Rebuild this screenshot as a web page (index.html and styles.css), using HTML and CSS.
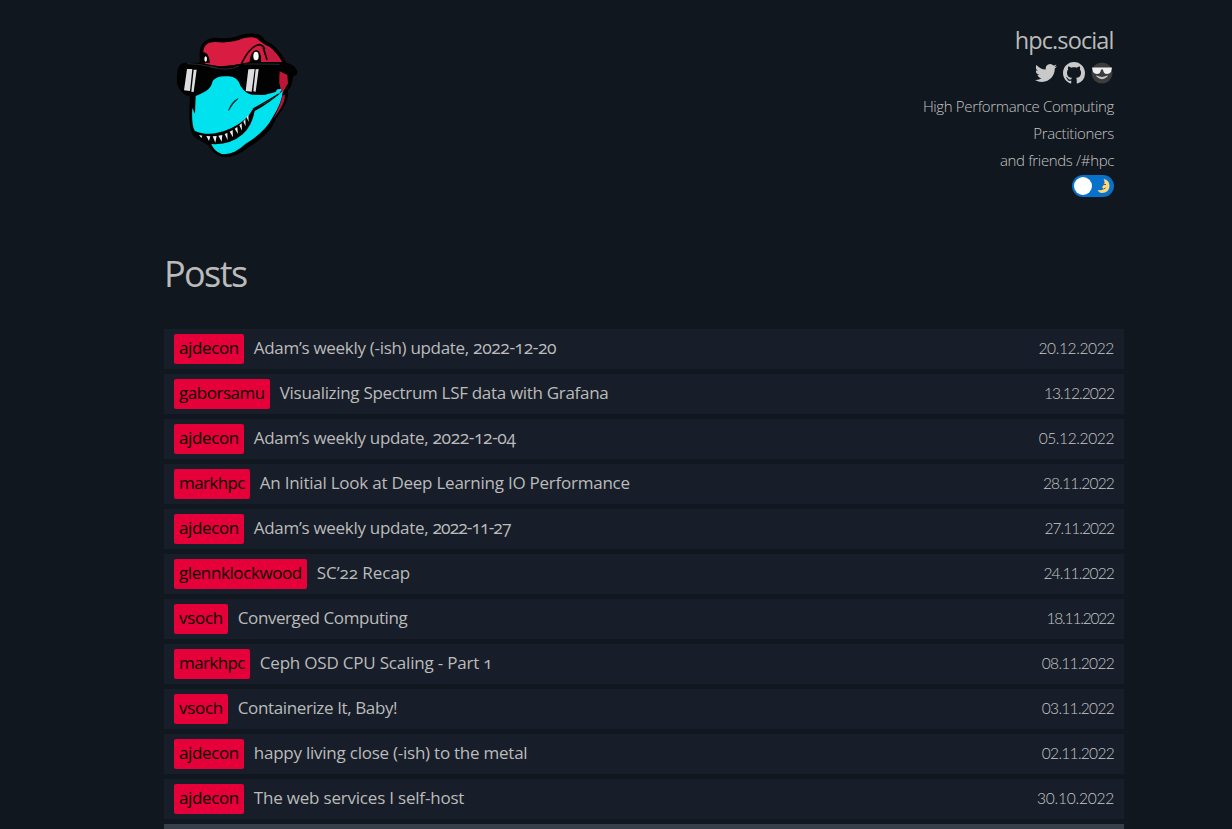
FILE: index.html
```html
<!DOCTYPE html>
<html lang="en"><head><meta charset="utf-8"><title>hpc.social</title><link rel="stylesheet" href="styles.css"></head>
<body>
<div class="page">
<header class="header">
<svg class="logo" viewBox="0 0 450 450" aria-label="Dinosaur with sunglasses">
<path d="M119 100Q119 55 168 53Q211 59 243 44Q303 32 314 60Q353 76 378 126L412 152Q414 166 400 168L394 196Q389 207 383 211Q389 230 370 264Q350 290 332 328Q302 362 262 384Q228 413 188 411Q156 401 145 376L103 351Q83 330 90 230Q50 216 51 179Q48 134 75 129L119 128Z" fill="#000"/>
<path d="M130 97Q130 67 165 66Q215 71 250 55Q290 46 299 63Q314 75 330 82Q352 100 366 126L268 126L237 133L184 140L135 131Z" fill="#d91c42"/>
<path d="M322 82Q350 98 362 126L318 126Q317 101 302 84Z" fill="#c51b40"/>
<path d="M245 130Q270 78 298 74Q309 75 314 88M309 78Q315 102 321 119" fill="none" stroke="#080006" stroke-width="5"/>
<path d="M268 129Q272 91 290 90Q306 96 303 129Z" fill="#000"/><ellipse cx="288" cy="108" rx="8" ry="13" fill="#fff"/>
<path d="M122 99Q145 88 150 128L124 130Z" fill="#000"/><ellipse cx="137" cy="117" rx="4" ry="8" fill="#fff"/>
<path d="M358 153L382 165L384 190L366 222L358 190Z" fill="#bd1738"/>
<path d="M107 228Q139 218 157 184Q169 166 204 169Q231 167 243 199Q267 228 317 224Q347 206 363 206Q367 213 353 225Q317 251 279 267Q260 303 213 325Q149 354 104 332Q94 316 97 264L105 281Z" fill="#00e2ed"/>
<path d="M368 213Q367 246 338 292Q315 337 257 371Q220 406 185 402Q162 394 154 372Q210 376 248 343Q276 318 284 273Q328 250 368 213Z" fill="#00e2ed"/>
<path d="M374 225Q378 249 340 296Q361 256 368 226Z" fill="#b5133a"/>
<path d="M111 347Q183 368 238 330Q262 311 275 275L277 290Q263 331 236 349Q196 374 157 370Q127 363 111 347Z" fill="#000"/>
<path d="M117 345L127 347L124 354ZM139 348L151 349L147 363ZM158 349L170 348L166 368ZM175 347L187 345L185 365ZM194 342L202 339L203 361ZM209 335L218 330L219 352ZM224 326L232 321L234 342ZM238 316L245 310L246 332ZM250 305L256 297L257 319ZM260 292L265 284L266 306Z" fill="#eee"/>
<path d="M206 271Q214 245 234 236Q218 249 206 271Z" fill="#001b20" stroke="#001b20" stroke-width="2"/>
<path d="M279 267Q326 241 356 222" fill="none" stroke="#000" stroke-width="4"/>
<path d="M55 143Q62 126 83 129Q134 135 180 139Q225 137 247 130Q316 130 354 126L389 131Q409 138 411 156Q407 166 393 165L359 151Q355 197 348 215Q322 226 275 224Q246 218 235 180Q216 160 188 161Q160 161 157 187Q149 221 97 225Q58 218 53 179Z" fill="#020203"/>
<path d="M82 131Q118 132 136 137L170 143M151 141Q205 155 237 138M252 132Q330 132 359 133" fill="none" stroke="#292a2e" stroke-width="3"/>
<path d="M81 147L97 147L90 213L72 211ZM101 149L110 149L101 216L94 215ZM265 148L284 147L275 215L257 213ZM287 148L296 147L287 215L280 214Z" fill="#dedee0"/>
</svg>
<div class="about">
<h1 class="site">hpc.social</h1>
<div class="icons">
<svg class="ic" viewBox="0 0 24 24"><path fill="#c9c9c9" d="M23.954 4.569a10 10 0 0 1-2.825.775 4.958 4.958 0 0 0 2.163-2.723 9.99 9.99 0 0 1-3.127 1.184 4.92 4.92 0 0 0-8.384 4.482C7.691 8.094 4.066 6.13 1.64 3.161a4.822 4.822 0 0 0-.666 2.475c0 1.71.87 3.213 2.188 4.096a4.904 4.904 0 0 1-2.228-.616v.061a4.923 4.923 0 0 0 3.946 4.827 4.996 4.996 0 0 1-2.212.085 4.937 4.937 0 0 0 4.604 3.417 9.868 9.868 0 0 1-6.102 2.105c-.39 0-.779-.023-1.17-.067a13.995 13.995 0 0 0 7.557 2.209c9.054 0 13.999-7.496 13.999-13.986 0-.209 0-.42-.015-.63a9.936 9.936 0 0 0 2.46-2.548z"/></svg>
<svg class="ic" viewBox="0 0 16 16"><path fill="#c9c9c9" d="M8 0C3.58 0 0 3.58 0 8c0 3.54 2.29 6.53 5.47 7.59.4.07.55-.17.55-.38 0-.19-.01-.82-.01-1.49-2.01.37-2.53-.49-2.69-.94-.09-.23-.48-.94-.82-1.13-.28-.15-.68-.52-.01-.53.63-.01 1.08.58 1.23.82.72 1.21 1.87.87 2.33.66.07-.52.28-.87.51-1.07-1.78-.2-3.64-.89-3.64-3.95 0-.87.31-1.59.82-2.15-.08-.2-.36-1.02.08-2.12 0 0 .67-.21 2.2.82.64-.18 1.32-.27 2-.27s1.36.09 2 .27c1.53-1.04 2.2-.82 2.2-.82.44 1.1.16 1.92.08 2.12.51.56.82 1.27.82 2.15 0 3.07-1.87 3.75-3.65 3.95.29.25.54.73.54 1.48 0 1.07-.01 1.93-.01 2.2 0 .21.15.46.55.38A8.01 8.01 0 0 0 16 8c0-4.42-3.58-8-8-8z"/></svg>
<svg class="ic" viewBox="0 0 22 22"><circle cx="11" cy="11" r="10.5" fill="#3c3c3c"/><path d="M1 5.500H21L20 10Q18.500 12 16 12Q12.500 12 12 7.500H10Q9.500 12 6 12Q3.500 12 2 10Z" fill="#eee"/><path d="M5.500 14Q11 19.500 16.500 14Q11 17 5.500 14Z" fill="#ddd" stroke="#ddd" stroke-width=".7"/></svg>
</div>
<p class="desc"><span>High Performance Computing</span><br><span>Practitioners</span><br><span>and friends /#hpc</span></p>
<div class="toggle"><i class="knob"></i><svg class="moon" viewBox="0 0 14 16"><path d="M6.500 1Q12.500 2 12.500 8Q12 15 5 15Q2 15 .500 12Q5 13 6.500 11L5 9L6.500 7.500Q8.500 4 6.500 1Z" fill="#ffd879"/><path d="M7 6.500H9M6.500 11L8.500 10" stroke="#75552d"/></svg></div>
</div>
</header>
<h2 class="heading">Posts</h2>
<main class="posts">
<a class="post"><b class="tag ajdecon">ajdecon</b><span class="title">Adam’s weekly (-ish) update, <span class="num">2022-12-20</span></span><time>20.12.2022</time></a>
<a class="post"><b class="tag gaborsamu">gaborsamu</b><span class="title">Visualizing Spectrum LSF data with Grafana</span><time>13.12.2022</time></a>
<a class="post"><b class="tag ajdecon">ajdecon</b><span class="title">Adam’s weekly update, <span class="num">2022-12-04</span></span><time>05.12.2022</time></a>
<a class="post"><b class="tag markhpc">markhpc</b><span class="title">An Initial Look at Deep Learning IO Performance</span><time>28.11.2022</time></a>
<a class="post"><b class="tag ajdecon">ajdecon</b><span class="title">Adam’s weekly update, <span class="num">2022-11-27</span></span><time>27.11.2022</time></a>
<a class="post"><b class="tag glennklockwood">glennklockwood</b><span class="title">SC’22 Recap</span><time>24.11.2022</time></a>
<a class="post"><b class="tag vsoch">vsoch</b><span class="title">Converged Computing</span><time>18.11.2022</time></a>
<a class="post"><b class="tag markhpc">markhpc</b><span class="title">Ceph OSD CPU Scaling - Part 1</span><time>08.11.2022</time></a>
<a class="post"><b class="tag vsoch">vsoch</b><span class="title">Containerize It, Baby!</span><time>03.11.2022</time></a>
<a class="post"><b class="tag ajdecon">ajdecon</b><span class="title">happy living close (-ish) to the metal</span><time>02.11.2022</time></a>
<a class="post"><b class="tag ajdecon">ajdecon</b><span class="title">The web services I self-host</span><time>30.10.2022</time></a>
<div class="more"></div>
</main>
</div>
</body></html>
```
FILE: styles.css
```css
*{box-sizing:border-box}
body{margin:0;height:829px;overflow:hidden;background:#10171e;color:#bbb;font-family:"Open Sans","Noto Sans",sans-serif}
.page{width:960px;margin-left:164px}
.header{display:flex;justify-content:space-between;padding:20px 10px 0 0;height:240px}
.logo{width:150px;height:150px;margin-left:-4px}
.about{display:flex;flex-direction:column;align-items:flex-end}
.site{margin:0 .5px 0 0;font-size:23.5px;font-weight:400;line-height:40px;letter-spacing:-.9px}
.icons{display:flex;gap:6px;align-items:center;margin:2px 1px 0 0;height:22px}
.ic{width:22px;height:22px}
.desc{margin:9px 0 0;font-size:15px;font-weight:300;line-height:27px;text-align:right;letter-spacing:-.35px;color:#c4c4c4}
.toggle{display:flex;justify-content:space-between;align-items:center;width:42px;height:22px;border-radius:11px;background:#0871ca;padding:0 3px 0 2px;margin-top:1px}
.knob{width:18px;height:18px;border-radius:50%;background:#fff}
.moon{width:14px;height:16px}
.heading{margin:0;height:89px;line-height:68px;font-size:36px;font-weight:400;letter-spacing:-1.6px}
.posts{display:flex;flex-direction:column;gap:5px}
.post{display:flex;align-items:center;height:40px;padding:0 10px;background:#171e29;font-size:17px}
.tag{font-weight:400;background:#e60039;color:#000;border-radius:2px;height:30px;line-height:28px;padding:0 5px}
.ajdecon{width:70px;letter-spacing:-.38px}
.gaborsamu{width:96px;letter-spacing:-.46px}
.markhpc{width:76px;letter-spacing:-.6px}
.glennklockwood{width:133px;letter-spacing:-.4px}
.vsoch{width:54px;letter-spacing:-.28px}
.title{margin-left:9.8px;padding-bottom:3px;font-variant-numeric:oldstyle-nums;white-space:nowrap;letter-spacing:-.24px}
.num{font-size:17.5px;line-height:1;letter-spacing:-.45px}
time{margin:0 0 0 auto;padding-bottom:2px;font:300 15.5px Lato,sans-serif;letter-spacing:-.7px;color:#c8c8c8}
.more{height:40px;background:#36404b}

.post:nth-child(1) .title,.post:nth-child(3) .title,.post:nth-child(5) .title{letter-spacing:-.3px}
.post:nth-child(1) time{letter-spacing:-.36px}
.post:nth-child(2) .title{letter-spacing:-.31px}
.post:nth-child(2) time{letter-spacing:-.91px}
.post:nth-child(3) time{letter-spacing:-.38px}
.post:nth-child(4) time{letter-spacing:-.81px}
.post:nth-child(5) .num{letter-spacing:-.95px}
.post:nth-child(5) time{letter-spacing:-.96px}
.post:nth-child(6) .title{letter-spacing:-.05px}
.post:nth-child(6) time{letter-spacing:-.86px}
.post:nth-child(7) .title{letter-spacing:-.42px}
.post:nth-child(7) time{letter-spacing:-1.16px}
.post:nth-child(8) .title{letter-spacing:-.2px}
.post:nth-child(9) .title{letter-spacing:-.38px}
.post:nth-child(11) .title{letter-spacing:-.2px}
.post:nth-child(11) time{letter-spacing:-.21px}
```
